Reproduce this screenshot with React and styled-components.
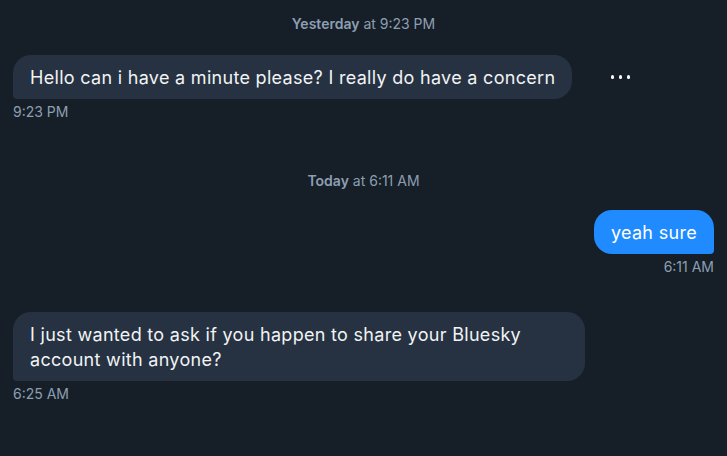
import React from "react";
import styled, { createGlobalStyle } from "styled-components";

const Global = createGlobalStyle`
  html, body { margin: 0; padding: 0; background: #161e27; }
  body { font-family: Inter, "Noto Sans", sans-serif; -webkit-font-smoothing: antialiased; }
`;

const Page = styled.div`
  width: 727px;
  height: 456px;
  box-sizing: border-box;
  padding: 16px 13px 0;
  background: #161e27;
  display: flex;
  flex-direction: column;
  overflow: hidden;
`;

const DateHeader = styled.div`
  text-align: center;
  font-size: 14px;
  line-height: 16px;
  color: #8d9eb2;
  margin-bottom: ${(p) => p.$bottom || 22}px;
  b { font-weight: 600; }
`;

const Group = styled.div`
  display: flex;
  flex-direction: column;
  align-items: ${(p) => (p.$mine ? "flex-end" : "flex-start")};
  margin-bottom: ${(p) => p.$bottom || 0}px;
`;

const Row = styled.div`
  display: flex;
  align-items: center;
  gap: 33px;
`;

const Bubble = styled.div`
  max-width: 538px;
  padding: 10px 17px 9px 17px;
  font-size: 18px;
  line-height: 25px;
  letter-spacing: 0.3px;
  color: ${(p) => (p.$mine ? "#ffffff" : "#f1f3f5")};
  background: ${(p) => (p.$mine ? "#208bfe" : "#263241")};
  border-radius: ${(p) => (p.$mine ? "18px 18px 4px 18px" : "18px 18px 18px 4px")};
`;

const Time = styled.div`
  margin-top: 5px;
  font-size: 14px;
  line-height: 16px;
  color: #8d9eb2;
`;

const MoreButton = styled.button`
  width: 30px;
  height: 30px;
  border: 0;
  padding: 0;
  background: transparent;
  display: flex;
  align-items: center;
  justify-content: center;
  gap: 4.5px;
  cursor: pointer;
  span {
    width: 3.5px;
    height: 3.5px;
    border-radius: 50%;
    background: #ffffff;
  }
`;

export default function App() {
  return (
    <>
      <Global />
      <Page>
        <DateHeader $bottom={23}>
          <b>Yesterday</b> at 9:23 PM
        </DateHeader>
        <Group $bottom={53}>
          <Row>
            <Bubble>Hello can i have a minute please? I really do have a concern</Bubble>
            <MoreButton aria-label="More">
              <span />
              <span />
              <span />
            </MoreButton>
          </Row>
          <Time>9:23 PM</Time>
        </Group>
        <DateHeader $bottom={21}>
          <b>Today</b> at 6:11 AM
        </DateHeader>
        <Group $mine $bottom={37}>
          <Bubble $mine>yeah sure</Bubble>
          <Time>6:11 AM</Time>
        </Group>
        <Group>
          <Bubble>I just wanted to ask if you happen to share your Bluesky account with anyone?</Bubble>
          <Time>6:25 AM</Time>
        </Group>
      </Page>
    </>
  );
}
